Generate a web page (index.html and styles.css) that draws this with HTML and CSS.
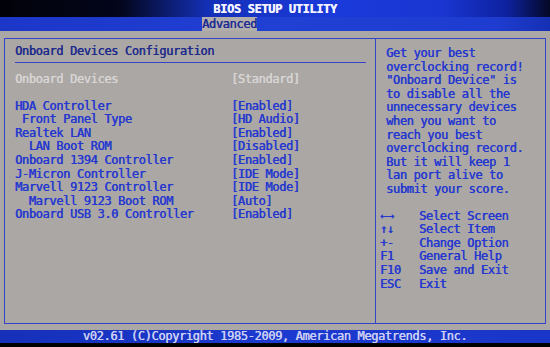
FILE: index.html
```html
<!DOCTYPE html>
<html lang="en">
<head>
  <meta charset="UTF-8">
  <title>BIOS Setup Utility</title>
  <link rel="stylesheet" href="styles.css">
</head>
<body>
  <div class="screen">
    <div class="titlebar">BIOS SETUP UTILITY</div>
    <div class="tabbar"><span class="tab">Advanced</span></div>

    <div class="main">
      <div class="frame">
        <!-- left: settings list -->
        <div class="settings">
          <div class="heading">Onboard Devices Configuration</div>
          <div class="rows">
            <div class="row dim"><span>Onboard Devices</span><span>[Standard]</span></div>
            <div class="row blank"></div>
            <div class="row"><span>HDA Controller</span><span>[Enabled]</span></div>
            <div class="row"><span> Front Panel Type</span><span>[HD Audio]</span></div>
            <div class="row"><span>Realtek LAN</span><span>[Enabled]</span></div>
            <div class="row"><span>  LAN Boot ROM</span><span>[Disabled]</span></div>
            <div class="row"><span>Onboard 1394 Controller</span><span>[Enabled]</span></div>
            <div class="row"><span>J-Micron Controller</span><span>[IDE Mode]</span></div>
            <div class="row"><span>Marvell 9123 Controller</span><span>[IDE Mode]</span></div>
            <div class="row"><span>  Marvell 9123 Boot ROM</span><span>[Auto]</span></div>
            <div class="row"><span>Onboard USB 3.0 Controller</span><span>[Enabled]</span></div>
          </div>
        </div>

        <!-- right: help text and keys -->
        <div class="help">
          <p class="help-text">Get your best
overclocking record!
"Onboard Device" is
to disable all the
unnecessary devices
when you want to
reach you best
overclocking record.
But it will keep 1
lan port alive to
submit your score.</p>
          <div class="keys">
            <span>&#8592;&#8594;</span><span>Select Screen</span>
            <span>&#8593;&#8595;</span><span>Select Item</span>
            <span>+-</span><span>Change Option</span>
            <span>F1</span><span>General Help</span>
            <span>F10</span><span>Save and Exit</span>
            <span>ESC</span><span>Exit</span>
          </div>
        </div>
      </div>
    </div>

    <div class="footer">v02.61 (C)Copyright 1985-2009, American Megatrends, Inc.</div>
  </div>
</body>
</html>
```

FILE: styles.css
```css
body {
  margin: 0;
  background: #000;
  font-family: "DejaVu Sans Mono", "Liberation Mono", monospace;
  font-size: 12px;
  letter-spacing: -0.36px;
  color: #2638d0;
  text-shadow: 0.4px 0 0 currentColor;
}

.screen {
  width: 550px;
  height: 347px;
  overflow: hidden;
  background: #000;
}

.titlebar {
  height: 17px;
  line-height: 19px;
  text-align: center;
  color: #f2f2ff;
  font-weight: bold;
  background: linear-gradient(to right, #010208 0%, #03061c 22%, #1430b8 38%, #1a3ada 60%, #1a36d2 80%, #0e22a0 92%, #040826 100%);
}

.tabbar {
  height: 14px;
  line-height: 14px;
  padding-left: 202px;
  background: linear-gradient(to right, #1c36c8 0%, #2040d4 50%, #1e3cd0 90%, #1630b4 100%);
}

.tab {
  display: inline-block;
  height: 14px;
  background: #b2aeab;
  color: #1e2c96;
}

.main {
  height: 299px;
  padding: 7px 4px 0;
  box-sizing: border-box;
  background: #aaa7a4;
}

.frame {
  display: grid;
  grid-template-columns: 371px 1fr;
  height: 286px;
  box-sizing: border-box;
  border: 1px solid #3444c8;
}

.settings {
  border-right: 1px solid #3444c8;
  padding: 5px 9px 0 10px;
}

.heading {
  line-height: 14px;
  padding-bottom: 4px;
  border-bottom: 1px solid #3444c8;
  color: #1e2a8c;
}

.rows {
  margin-top: 9.5px;
}

.row {
  display: grid;
  grid-template-columns: 216px 1fr;
  height: 13.6px;
  line-height: 13.6px;
  white-space: pre;
}

.row.dim {
  color: #d8d5d4;
}

.help {
  padding: 8px 0 0 4px;
}

.help-text {
  margin: 0;
  padding-left: 6px;
  white-space: pre;
  line-height: 13.6px;
}

.keys {
  display: grid;
  grid-template-columns: 39px 1fr;
  margin-top: 13px;
  line-height: 13.6px;
}

.footer {
  height: 13px;
  line-height: 13px;
  text-align: center;
  color: #ccd0f4;
  background: linear-gradient(to right, #1630b8 0%, #1c3ad0 50%, #1a36c8 100%);
  border-bottom: 4px solid #000;
}
```
